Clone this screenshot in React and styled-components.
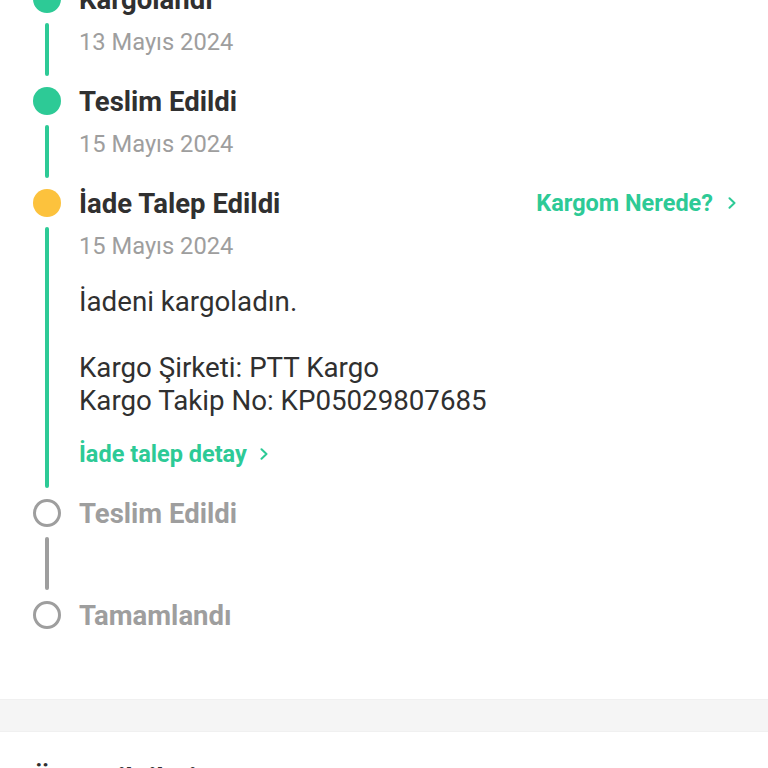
import styled, { createGlobalStyle } from 'styled-components'

const GREEN = '#2dca96'
const YELLOW = '#fcc23d'
const GREY = '#9e9e9e'
const DARK = '#303030'

const GlobalStyle = createGlobalStyle`
  html, body {
    margin: 0;
    padding: 0;
    overflow: hidden;
    background: #fff;
  }
  body {
    font-family: Roboto, "Noto Sans", sans-serif;
    color: ${DARK};
  }
`

const Timeline = styled.div`
  margin-top: -15px;
  padding: 0 32px 70px 33px;
`

const Step = styled.div`
  display: grid;
  grid-template-columns: 28px 1fr;
  column-gap: 18px;
`

const Dot = styled.span`
  width: 28px;
  height: 28px;
  box-sizing: border-box;
  border-radius: 50%;
  background: ${(p) => (p.$state === 'done' ? GREEN : p.$state === 'current' ? YELLOW : 'transparent')};
  border: ${(p) => (p.$state === 'pending' ? `3.5px solid ${GREY}` : 'none')};
`

const Header = styled.div`
  display: flex;
  align-items: center;
  justify-content: space-between;
  height: 28px;
`

const Title = styled.span`
  font-size: 27.5px;
  font-weight: 700;
  line-height: 30px;
  padding-top: 2px;
  color: ${(p) => (p.$muted ? GREY : DARK)};
`

const Rail = styled.div`
  display: flex;
  justify-content: center;
  padding: 10px 0 11px;
`

const Line = styled.span`
  width: 4px;
  border-radius: 2px;
  background: ${(p) => (p.$muted ? GREY : GREEN)};
`

const Body = styled.div`
  min-height: 74px;
  padding: 14px 0 30px;
  box-sizing: border-box;
`

const Date = styled.div`
  font-size: 23.7px;
  line-height: 30px;
  color: ${GREY};
`

const Message = styled.div`
  margin-top: 24px;
  font-size: 27.7px;
  line-height: 33px;
  white-space: pre-line;
  color: ${DARK};
`

const LinkButton = styled.a`
  display: inline-flex;
  align-items: center;
  gap: ${(p) => (p.$wide ? 15 : 13)}px;
  margin-top: ${(p) => (p.$inline ? 0 : 22)}px;
  font-size: 23.5px;
  font-weight: 700;
  line-height: 30px;
  color: ${GREEN};
  text-decoration: none;
  cursor: pointer;
`

const Band = styled.div`
  height: 31px;
  background: #f5f5f5;
  border-top: 1px solid #f0f0f0;
  border-bottom: 1px solid #f0f0f0;
`

const SectionTitle = styled.h2`
  margin: 0;
  padding: 30px 33px 0;
  font-size: 28px;
  font-weight: 700;
  line-height: 34px;
  color: ${DARK};
`

const Chevron = () => (
  <svg width="8" height="12" viewBox="0 0 8 12" fill="none">
    <path d="M1.5 1.2 L6.5 6 L1.5 10.8" stroke={GREEN} strokeWidth="2" strokeLinecap="round" strokeLinejoin="round" />
  </svg>
)

const steps = [
  { title: 'Kargolandı', date: '13 Mayıs 2024', state: 'done' },
  { title: 'Teslim Edildi', date: '15 Mayıs 2024', state: 'done' },
  {
    title: 'İade Talep Edildi',
    date: '15 Mayıs 2024',
    state: 'current',
    action: 'Kargom Nerede?',
    message: 'İadeni kargoladın.\n\nKargo Şirketi: PTT Kargo\nKargo Takip No: KP05029807685',
    link: 'İade talep detay',
  },
  { title: 'Teslim Edildi', state: 'pending' },
  { title: 'Tamamlandı', state: 'pending' },
]

const App = () => {
  return (
    <>
      <GlobalStyle />
      <Timeline>
        {steps.map((step, i) => {
          const last = i === steps.length - 1
          const muted = step.state === 'pending'
          return (
            <Step key={i}>
              <Dot $state={step.state} />
              <Header>
                <Title $muted={muted}>{step.title}</Title>
                {step.action && (
                  <LinkButton $inline $wide>
                    {step.action}
                    <Chevron />
                  </LinkButton>
                )}
              </Header>
              {!last && (
                <>
                  <Rail>
                    <Line $muted={muted} />
                  </Rail>
                  <Body>
                    {step.date && <Date>{step.date}</Date>}
                    {step.message && <Message>{step.message}</Message>}
                    {step.link && (
                      <LinkButton>
                        {step.link}
                        <Chevron />
                      </LinkButton>
                    )}
                  </Body>
                </>
              )}
            </Step>
          )
        })}
      </Timeline>
      <Band />
      <SectionTitle>Ürün Bilgileri</SectionTitle>
    </>
  )
}

export default App
